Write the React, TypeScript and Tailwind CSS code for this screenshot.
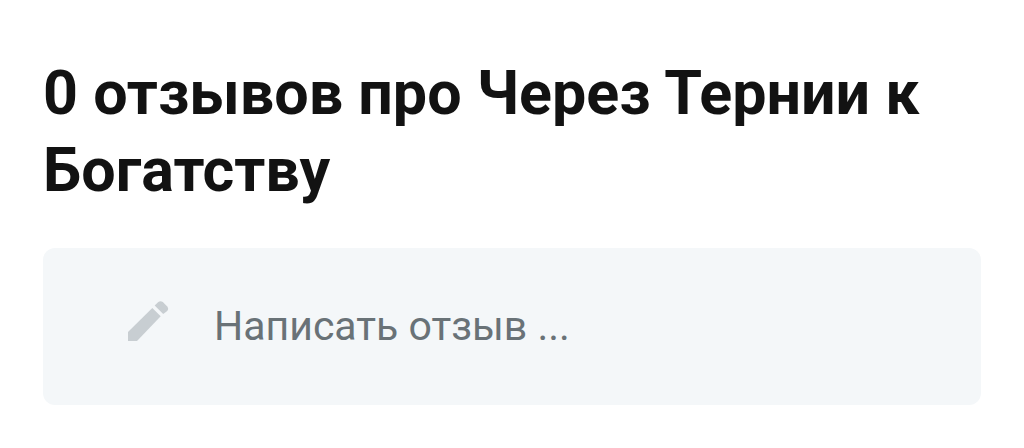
import React from "react";

function PencilIcon() {
  return (
    <svg
      viewBox="0 0 54 54"
      fill="currentColor"
      aria-hidden="true"
      className="size-[54px] shrink-0 text-[#c8ced2]"
    >
      <path d="M7 38 31.3 13.9 39.7 22.3 16 47H7Z" />
      <path d="M33.7 11.5 37.3 8.1Q39.5 6.2 41.8 8.1L46 12.3Q48.2 14.7 46.2 17L42.2 20Z" />
    </svg>
  );
}

export default function ReviewsSection() {
  return (
    <section className="w-full bg-white px-[43px] pt-[55px] pb-11 font-['Roboto','Noto_Sans',sans-serif] antialiased">
      <h1 className="text-[61px] leading-[77px] font-bold text-[#121212]">
        0 отзывов про Через Тернии к Богатству
      </h1>

      {/* Review form trigger */}
      <button
        type="button"
        className="mt-[39px] flex w-full items-start gap-[39px] rounded-xl bg-[#f4f7f9] px-[78px] py-[46px] text-left"
      >
        <PencilIcon />
        <span className="text-[41px] leading-[65px] text-[#697277]">
          Написать отзыв ...
        </span>
      </button>
    </section>
  );
}
